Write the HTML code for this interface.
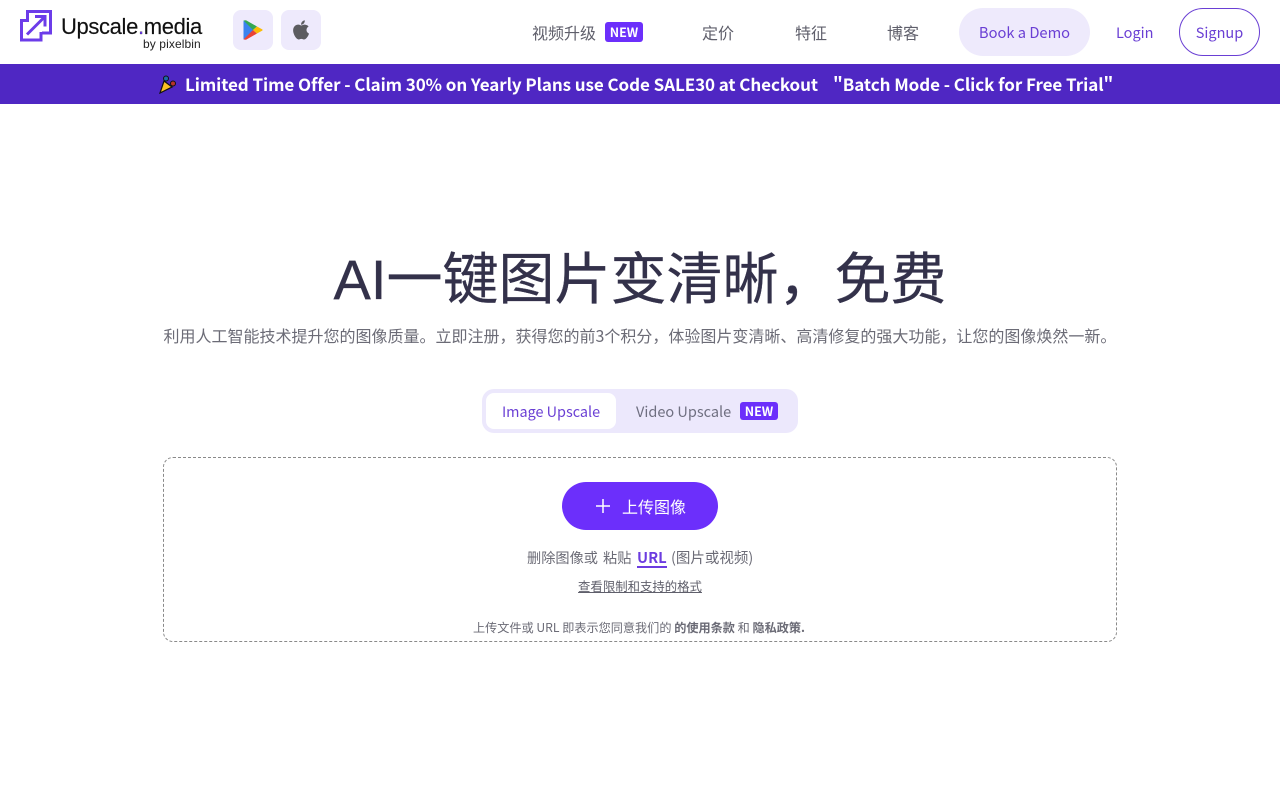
<!DOCTYPE html>
<html lang="zh"><head><meta charset="utf-8"><title>Upscale.media</title>
<style>
*{box-sizing:border-box;margin:0;padding:0}
html,body{width:1280px;height:800px;overflow:hidden;background:#fff}
body{position:relative;font-family:"Noto Sans CJK SC","Liberation Sans",sans-serif;color:#5f5f6b}
.a{position:absolute;white-space:nowrap;line-height:1}
.badge{position:absolute;background:#6c2ffb;color:#fff;font-weight:700;border-radius:3px;text-align:center;font-size:12.500px}
</style></head><body>
<svg class="a" style="left:20px;top:10px" width="32" height="32" viewBox="0 0 32 32" fill="none" stroke="#6c3ce9" stroke-width="3"><path d="M7.500 9V1.500H30.500V23H22"/><path d="M9 10.500H1.500V30H21V22"/><path d="M7 24.500L25 6.500M15 6.500H25V16.500"/></svg>
<div class="a" style="left:61px;top:15px;font-size:22px;letter-spacing:-.36px;color:#111;line-height:24px;font-family:'Liberation Sans',sans-serif;-webkit-text-stroke:.15px #111">Upscale<span style="color:#6c3ce9">.</span>media</div>
<div class="a" style="left:143px;top:37px;font:12px 'Liberation Sans',sans-serif;color:#222;letter-spacing:.1px">by pixelbin</div>
<div class="a" style="left:233px;top:10px;width:40px;height:40px;background:#eeeafc;border-radius:8px"></div>
<svg class="a" style="left:243px;top:20px" width="20" height="20" viewBox="0 0 20 20"><path d="M1 1V19L10 10Z" fill="#3b82ee" stroke="#3b82ee" stroke-linejoin="round"/><path d="M.5 .5L10 10L14 6.500L3 .3Z" fill="#34a853"/><path d="M.5 19.500L10 10L14 13.500L3 19.700Z" fill="#ea4335"/><path d="M14 6.500L19.500 9.500V10.500L14 13.500L10 10Z" fill="#fbbc04"/></svg>
<div class="a" style="left:281px;top:10px;width:40px;height:40px;background:#eeeafc;border-radius:8px"></div>
<svg class="a" style="left:292px;top:20px" width="18" height="20" viewBox="0 0 18 20"><path d="M9 5.500C7.500 4.400 5.500 4.300 3.800 5.200C1.200 6.700 .5 10 1.700 13.500C2.800 16.800 5 19.500 6.800 19.500C7.800 19.500 8.200 18.900 9.300 18.900C10.400 18.900 10.800 19.500 11.900 19.500C14 19.500 16.300 16.200 17 13.600C15.300 12.800 14.500 11.500 14.500 10C14.500 8.500 15.300 7.300 16.600 6.500C15.300 4.800 12.400 4.200 10.800 5C10.200 5.300 9.500 5.500 9 5.500Z" fill="#5c5c60"/><path d="M9 4.800C9 2.500 10.600 .7 12.800 .3C13 2.700 11.300 4.800 9 4.800Z" fill="#5c5c60"/></svg>

<div class="a" style="left:532px;top:23px;font-size:16px;line-height:18px">视频升级</div>
<div class="badge" style="left:605px;top:22px;width:38px;height:20px;line-height:20px">NEW</div>
<div class="a" style="left:702px;top:23px;font-size:16px;line-height:18px">定价</div>
<div class="a" style="left:795px;top:23px;font-size:16px;line-height:18px">特征</div>
<div class="a" style="left:887px;top:23px;font-size:16px;line-height:18px">博客</div>
<div class="a" style="left:959px;top:8px;width:131px;height:48px;background:#eeeafc;border-radius:24px;color:#6a3fd4;font-size:14.700px;line-height:50px;text-align:center">Book a Demo</div>
<div class="a" style="left:1116px;top:9px;color:#6a3fd4;font-size:14.500px;line-height:48px">Login</div>
<div class="a" style="left:1179px;top:8px;width:81px;height:48px;border:1px solid #6a3fd4;border-radius:24px;color:#6a3fd4;font-size:14.500px;line-height:48px;text-align:center">Signup</div>

<div class="a" style="left:0;top:64px;width:1280px;height:40px;background:#4f27c3"></div>
<svg class="a" style="left:159px;top:75px" width="19" height="19" viewBox="0 0 19 19"><path d="M5 6L13 12L1 18Z" fill="#fbbf24" stroke="#111" stroke-width="1.200"/><circle cx="7" cy="3.500" r="2.500" fill="#1e6aa8" stroke="#111"/><circle cx="14" cy="8.500" r="2.500" fill="#b8342c" stroke="#111"/></svg>
<div class="a" style="left:185px;top:74px;color:#fff;font-weight:700;font-size:17px;letter-spacing:-.075px;line-height:20px">Limited Time Offer - Claim 30% on Yearly Plans use Code SALE30 at Checkout</div>
<div class="a" style="left:833px;top:74px;color:#fff;font-weight:700;font-size:17px;letter-spacing:-.06px;line-height:20px">"Batch Mode - Click for Free Trial"</div>

<div class="a" style="left:0;width:1280px;top:246px;text-align:center;font-family:'Liberation Sans','Noto Sans CJK SC',sans-serif;font-size:56px;line-height:68px;color:#33314a;-webkit-text-stroke:.3px #33314a">AI一键图片变清晰，免费</div>
<div class="a" style="left:0;width:1280px;top:325px;text-align:center;font-size:16px;line-height:20px;color:#6b6b76">利用人工智能技术提升您的图像质量。立即注册，获得您的前3个积分，体验图片变清晰、高清修复的强大功能，让您的图像焕然一新。</div>

<div class="a" style="left:482px;top:389px;width:316px;height:44px;background:#ece8fc;border-radius:12px"></div>
<div class="a" style="left:486px;top:393px;width:130px;height:36px;background:#fff;border-radius:8px;color:#6a3fd4;font-size:14.400px;line-height:37px;text-align:center">Image Upscale</div>
<div class="a" style="left:636px;top:393px;color:#6f6f80;font-size:14.500px;line-height:37px">Video Upscale</div>
<div class="badge" style="left:740px;top:402px;width:38px;height:18px;line-height:18px">NEW</div>

<div class="a" style="left:163px;top:457px;width:954px;height:185px;border:1px dashed #8a8a8a;border-radius:10px"></div>
<div class="a" style="left:562px;top:482px;width:156px;height:48px;background:#6c2ffb;border-radius:24px"></div>
<svg class="a" style="left:596px;top:499px" width="14" height="14" viewBox="0 0 14 14" stroke="#fff" stroke-width="1.500"><path d="M7 0V14M0 7H14"/></svg>
<div class="a" style="left:622px;top:497px;color:#fff;font-size:16px;line-height:18px">上传图像</div>
<div class="a" style="left:527px;top:549px;font-size:14.200px;line-height:18px;color:#6b6b76">删除图像或</div>
<div class="a" style="left:603px;top:549px;font-size:14.200px;line-height:18px;color:#6b6b76">粘贴</div>
<div class="a" style="left:637px;top:549px;color:#6c3ce0;font-weight:700;font-size:14.800px;line-height:17px;border-bottom:2px solid #6c3ce0">URL</div>
<div class="a" style="left:671px;top:549px;font-size:14.500px;line-height:18px;color:#6b6b76">(图片或视频)</div>
<div class="a" style="left:0;width:1280px;top:578px;text-align:center;font-size:12.400px;line-height:16px;color:#5f5f6b;text-decoration:underline">查看限制和支持的格式</div>
<div class="a" style="left:473px;top:620px;font-size:12.150px;line-height:16px;color:#6b6b76">上传文件或 URL 即表示您同意我们的 <b>的使用条款</b> 和 <b>隐私政策.</b></div>
</body></html>
